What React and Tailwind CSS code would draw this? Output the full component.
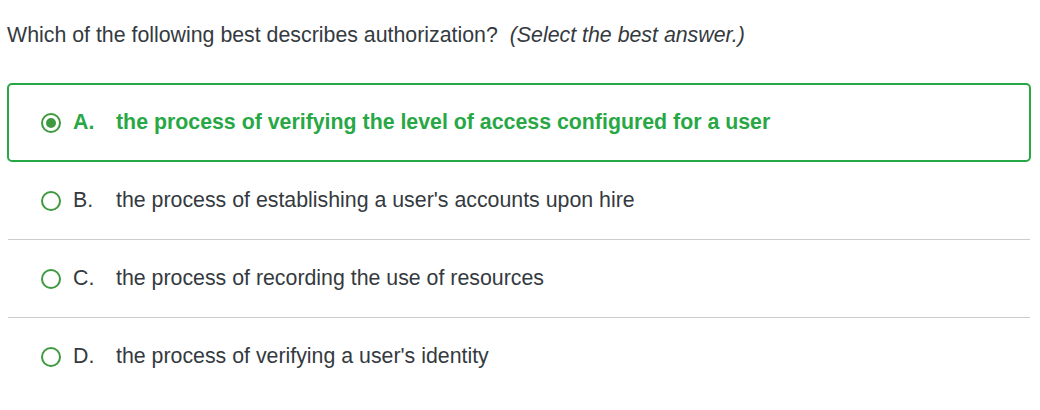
import React from "react";

const options = [
  { letter: "A.", text: "the process of verifying the level of access configured for a user", selected: true },
  { letter: "B.", text: "the process of establishing a user's accounts upon hire" },
  { letter: "C.", text: "the process of recording the use of resources" },
  { letter: "D.", text: "the process of verifying a user's identity" },
];

function Radio({ checked }) {
  return (
    <span className="flex h-5 w-5 shrink-0 items-center justify-center rounded-full border-2 border-[#3f9a3f] bg-white">
      {checked && <span className="h-[10px] w-[10px] rounded-full bg-[#3f9a3f]" />}
    </span>
  );
}

export default function App() {
  return (
    <div className="w-[1040px] h-[410px] bg-white px-[7px] pt-[20px] text-[#343a40]" style={{ fontFamily: '"Liberation Sans", Arial, sans-serif' }}>
      <p className="text-[21.33px] leading-[30px]">
        Which of the following best describes authorization?{" "}
        <span className="ml-[6px] italic">(Select the best answer.)</span>
      </p>

      <ul className="mt-[33px] w-[1024px]">
        {options.map((o, i) => (
          <li
            key={o.letter}
            className={
              o.selected
                ? "flex h-[79px] items-center rounded-[5px] border-2 border-[#28a745] pl-[32px] text-[#28a745] font-bold"
                : "flex h-[78px] items-center pl-[33px] mx-[1px] " + (i < options.length - 1 ? "border-b border-[#cccccc]" : "")
            }
          >
            <Radio checked={o.selected} />
            <span className="ml-[12px] w-[43px] shrink-0 text-[21.33px]">{o.letter}</span>
            <span className="text-[21.33px]">{o.text}</span>
          </li>
        ))}
      </ul>
    </div>
  );
}
